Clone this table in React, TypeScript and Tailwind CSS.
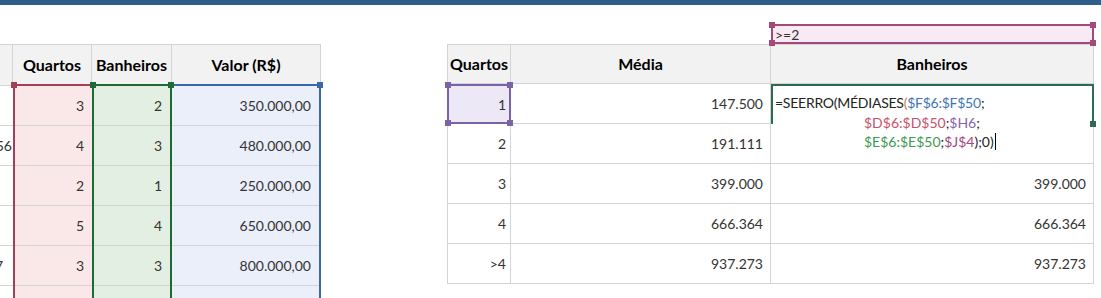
import React from "react";

const GRAY = "border-[#d4d4d4]";

function Handle({ pos, color }: { pos: string; color: string }) {
  return <span className={`absolute w-[6px] h-[6px] z-20 ${pos} ${color}`} />;
}

function HeaderCell({ children, w }: { children?: React.ReactNode; w: string }) {
  return (
    <div
      className={`${w} h-[39px] border-r ${GRAY} bg-[#f2f2f2] flex items-center justify-center font-bold text-[16px] text-black whitespace-nowrap`}
    >
      {children}
    </div>
  );
}

function DataCell({ children, fill }: { children?: React.ReactNode; fill: string }) {
  return (
    <div
      className={`h-[40px] border-b ${GRAY} ${fill} flex items-center justify-end pr-[8px] text-[14px] text-[#333] whitespace-nowrap`}
    >
      {children}
    </div>
  );
}

function LeftTable() {
  const quartos = ["3", "4", "2", "5", "3", ""];
  const banheiros = ["2", "3", "1", "4", "3", ""];
  const valores = ["350.000,00", "480.000,00", "250.000,00", "650.000,00", "800.000,00", ""];
  const first: React.ReactNode[] = ["", "56", "", "", <span className="mr-[9px]">7</span>, ""];
  return (
    <div className={`flex mt-[20px] shrink-0 border-t ${GRAY}`}>
      {/* partial first column */}
      <div className="flex flex-col w-[13px]">
        <div className={`h-[41px] border-r border-b ${GRAY} bg-[#f2f2f2]`} />
        {first.map((v, i) => (
          <div
            key={i}
            className={`h-[40px] border-b ${GRAY} flex items-center justify-end overflow-hidden pr-[1px] text-[14px] text-[#333] whitespace-nowrap`}
          >
            {v}
          </div>
        ))}
      </div>
      {/* Quartos */}
      <div className="flex flex-col w-[79px]">
        <HeaderCell w="w-[79px]">Quartos</HeaderCell>
        <div className="relative flex flex-col border-l-2 border-t-2 border-[#a2405a]">
          <Handle pos="-left-[4px] -top-[4px]" color="bg-[#a2405a]" />
          {quartos.map((v, i) => (
            <DataCell key={i} fill="bg-[#fae8e9]">
              {v}
            </DataCell>
          ))}
        </div>
      </div>
      {/* Banheiros */}
      <div className="flex flex-col w-[80px]">
        <HeaderCell w="w-[80px]">Banheiros</HeaderCell>
        <div className="relative flex flex-col border-x-2 border-t-2 border-[#1e6a36]">
          <Handle pos="-left-[4px] -top-[4px]" color="bg-[#1e6a36]" />
          <Handle pos="-right-[4px] -top-[4px]" color="bg-[#1e6a36]" />
          {banheiros.map((v, i) => (
            <DataCell key={i} fill="bg-[#e4efe3]">
              {v}
            </DataCell>
          ))}
        </div>
      </div>
      {/* Valor */}
      <div className="flex flex-col w-[149px]">
        <HeaderCell w="w-[149px]">Valor (R$)</HeaderCell>
        <div className="relative flex flex-col border-r-2 border-t-2 border-[#3d66a6]">
          <Handle pos="-right-[4px] -top-[4px]" color="bg-[#3d66a6]" />
          {valores.map((v, i) => (
            <DataCell key={i} fill="bg-[#ebeffa]">
              {v}
            </DataCell>
          ))}
        </div>
      </div>
    </div>
  );
}

function Formula() {
  return (
    <div className="absolute left-0 top-0 w-full h-[77px] bg-white z-10 pl-[2px] pt-[7px] text-[14px] leading-[19.5px] text-[#222] whitespace-pre">
      <div className="tracking-[-0.25px]">
        =SEERRO(MÉDIASES<span className="text-[#d4803a]">(</span>
        <span className="text-[#3f74b8]">$F$6:$F$50</span>;
      </div>
      <div className="pl-[89px]">
        <span className="text-[#c8506a]">$D$6:$D$50</span>;<span className="text-[#8466ac]">$H6</span>;
      </div>
      <div className="pl-[89px] flex items-center">
        <span className="text-[#3d9a4e]">$E$6:$E$50</span>;<span className="text-[#a8447e]">$J$4</span>);0)
        <span className="inline-block w-[1px] h-[17px] bg-black ml-[1px]" />
      </div>
    </div>
  );
}

function RightTable() {
  const rows = [
    ["1", "147.500", ""],
    ["2", "191.111", ""],
    ["3", "399.000", "399.000"],
    ["4", "666.364", "666.364"],
    [">4", "937.273", "937.273"],
  ];
  const headers = ["Quartos", "Média", "Banheiros"];
  const base = `h-[40px] flex items-center justify-end whitespace-nowrap text-[14px] text-[#333]`;
  return (
    <div className="ml-[126px] shrink-0 grid grid-cols-[64px_260px_323px]">
      <div className="h-[20px]" />
      <div className="h-[20px]" />
      <div className="relative h-[20px] border-2 border-[#a24a7c] bg-[#f9e9f3] flex items-center pl-[2px] text-[14px] text-[#333]">
        &gt;=2
        <Handle pos="-left-[4px] -top-[4px]" color="bg-[#a24a7c]" />
        <Handle pos="-right-[4px] -top-[4px]" color="bg-[#a24a7c]" />
        <Handle pos="-left-[4px] -bottom-[4px]" color="bg-[#a24a7c]" />
        <Handle pos="-right-[4px] -bottom-[4px]" color="bg-[#a24a7c]" />
      </div>
      {headers.map((h, i) => (
        <div
          key={"h" + i}
          className={`h-[40px] border-t border-b border-r ${GRAY} bg-[#f2f2f2] flex items-center justify-center font-bold text-[16px] text-black ${
            i === 0 ? "border-l" : ""
          }`}
        >
          {h}
        </div>
      ))}
      {rows.map((r, ri) =>
        r.map((c, ci) => {
          if (ri === 0 && ci === 0) {
            return (
              <div key="sel" className={`relative ${base} border-2 border-[#7b61a6] bg-[#ece8f5] pr-[3px]`}>
                {c}
                <Handle pos="-left-[4px] -top-[4px]" color="bg-[#7b61a6]" />
                <Handle pos="-right-[4px] -top-[4px]" color="bg-[#7b61a6]" />
                <Handle pos="-left-[4px] -bottom-[4px]" color="bg-[#7b61a6]" />
                <Handle pos="-right-[4px] -bottom-[4px]" color="bg-[#7b61a6]" />
              </div>
            );
          }
          if (ri === 0 && ci === 2) {
            return (
              <div key="edit" className={`relative h-[40px] border-t-2 border-x-2 border-[#2f6b50]`}>
                <Formula />
                <Handle pos="-right-[4px] -bottom-[3px]" color="bg-[#2f6b50]" />
              </div>
            );
          }
          return (
            <div
              key={ri + "-" + ci}
              className={`${base} border-b border-r ${GRAY} bg-white ${
                ci === 0 ? "border-l pr-[4px]" : "pr-[7px]"
              }`}
            >
              {c}
            </div>
          );
        })
      )}
    </div>
  );
}

export default function App() {
  return (
    <div className="w-[1101px] h-[298px] overflow-hidden bg-white font-['Lato','Noto_Sans',sans-serif]">
      <div className="h-[5px] bg-[#2e5d8c]" />
      <div className="flex items-start pt-[19px]">
        <LeftTable />
        <RightTable />
      </div>
    </div>
  );
}
